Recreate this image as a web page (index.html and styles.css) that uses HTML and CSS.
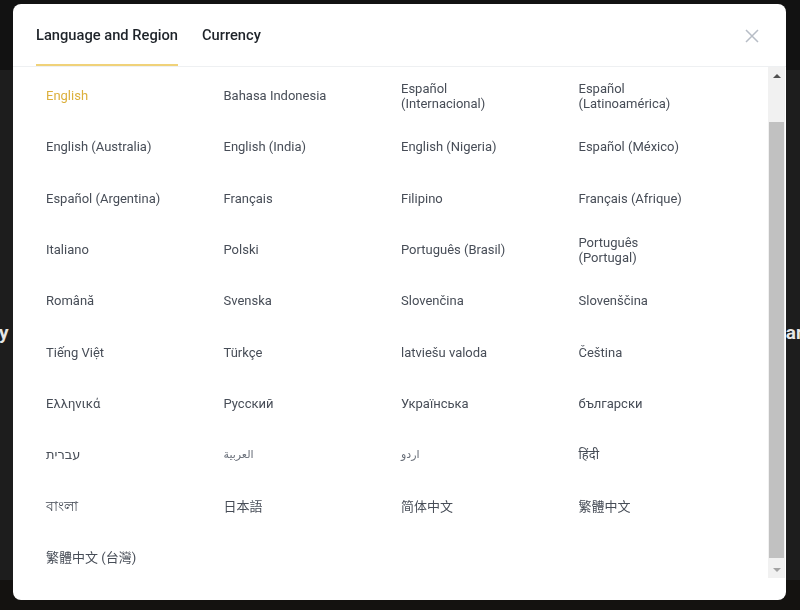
FILE: index.html
```html
<!DOCTYPE html>
<html lang="en">
<head>
<meta charset="utf-8">
<title>Language and Region</title>
<link rel="stylesheet" href="styles.css">
</head>
<body>
<div class="page">
  <div class="topbar"></div>
  <div class="hero">
    <div class="hero-line"><span class="hero-l">y</span><span class="hero-r">ar</span></div>
  </div>
  <div class="footer-strip"></div>
</div>

<div class="modal">
  <div class="modal-head">
    <div class="tabs">
      <div class="tab active">Language and Region</div>
      <div class="tab">Currency</div>
    </div>
    <button class="close" aria-label="Close">
      <svg width="14" height="14" viewBox="0 0 14 14"><path d="M1 1 L13 13 M13 1 L1 13" stroke="#b7bdc6" stroke-width="1.5" fill="none"/></svg>
    </button>
  </div>
  <div class="modal-body">
    <div class="list">
      <div class="item selected">English</div>
      <div class="item">Bahasa Indonesia</div>
      <div class="item">Español<br>(Internacional)</div>
      <div class="item">Español<br>(Latinoamérica)</div>

      <div class="item">English (Australia)</div>
      <div class="item">English (India)</div>
      <div class="item">English (Nigeria)</div>
      <div class="item">Español (México)</div>

      <div class="item">Español (Argentina)</div>
      <div class="item">Français</div>
      <div class="item">Filipino</div>
      <div class="item">Français (Afrique)</div>

      <div class="item">Italiano</div>
      <div class="item">Polski</div>
      <div class="item">Português (Brasil)</div>
      <div class="item">Português<br>(Portugal)</div>

      <div class="item">Română</div>
      <div class="item">Svenska</div>
      <div class="item">Slovenčina</div>
      <div class="item">Slovenščina</div>

      <div class="item">Tiếng Việt</div>
      <div class="item">Türkçe</div>
      <div class="item">latviešu valoda</div>
      <div class="item">Čeština</div>

      <div class="item">Ελληνικά</div>
      <div class="item">Русский</div>
      <div class="item">Українська</div>
      <div class="item">български</div>

      <div class="item">עברית</div>
      <div class="item arabic">العربية</div>
      <div class="item arabic">اردو</div>
      <div class="item">हिंदी</div>

      <div class="item bengali">বাংলা</div>
      <div class="item">日本語</div>
      <div class="item">简体中文</div>
      <div class="item">繁體中文</div>

      <div class="item">繁體中文 (台灣)</div>
    </div>
    <div class="scrollbar">
      <div class="sb-btn"><span class="arrow-up"></span></div>
      <div class="sb-track"><div class="sb-thumb"></div></div>
      <div class="sb-btn"><span class="arrow-down"></span></div>
    </div>
  </div>
</div>
</body>
</html>
```

FILE: styles.css
```css
* { box-sizing: border-box; }

html, body {
  margin: 0;
  padding: 0;
  width: 800px;
  height: 610px;
  overflow: hidden;
  background: #161616;
  font-family: Roboto, "Noto Sans", "DejaVu Sans", "Noto Sans CJK SC", sans-serif;
}

.page {
  height: 610px;
  display: flex;
  flex-direction: column;
}

.topbar {
  height: 70px;
  background: #121212;
}

.hero {
  flex: 1;
  background: #1d1d1d;
  display: flex;
  flex-direction: column;
  justify-content: center;
}

.hero-line {
  display: flex;
  justify-content: space-between;
  color: #e6e6e6;
  font-weight: 700;
  font-size: 19px;
  margin-top: 14px;
}

.hero-l { margin-left: -1px; }
.hero-r { margin-right: -3px; }

.footer-strip {
  height: 30px;
  background: #141210;
}

.modal {
  position: fixed;
  left: 13px;
  top: 4px;
  width: 773px;
  height: 596px;
  background: #ffffff;
  border-radius: 8px;
  display: flex;
  flex-direction: column;
  overflow: hidden;
}

.modal-head {
  height: 63px;
  flex: none;
  display: flex;
  align-items: stretch;
  padding: 0 27px 0 23px;
  border-bottom: 1px solid #eef0f2;
}

.tabs {
  display: flex;
  gap: 24px;
}

.tab {
  display: flex;
  align-items: center;
  padding-top: 2px;
  font-size: 14.7px;
  font-weight: 500;
  color: #1e2329;
  border-bottom: 2px solid transparent;
}

.tab.active {
  border-bottom-color: #f0d279;
}

.close {
  margin-left: auto;
  align-self: center;
  margin-top: 2px;
  background: none;
  border: 0;
  padding: 0;
  width: 14px;
  height: 14px;
  display: flex;
}

.modal-body {
  height: 511px;
  flex: none;
  display: flex;
  margin-right: 1px;
}

.list {
  flex: 1;
  overflow: hidden;
  display: grid;
  grid-template-columns: repeat(4, 1fr);
  grid-auto-rows: 51.33px;
  align-items: center;
  align-content: start;
  padding: 3px 12px 0 33px;
}

.item {
  font-size: 13px;
  line-height: 15px;
  color: #474d57;
}

.item.selected {
  color: #dcb03d;
}

.item.arabic {
  font-size: 11px;
  color: #6a707a;
}

.item.bengali {
  font-size: 14px;
}

.scrollbar {
  width: 17px;
  flex: none;
  background: #f1f1f1;
  display: flex;
  flex-direction: column;
}

.sb-btn {
  height: 17px;
  flex: none;
  display: flex;
  align-items: center;
  justify-content: center;
}

.arrow-up {
  width: 0;
  height: 0;
  border-left: 4px solid transparent;
  border-right: 4px solid transparent;
  border-bottom: 4px solid #505050;
}

.arrow-down {
  width: 0;
  height: 0;
  border-left: 4px solid transparent;
  border-right: 4px solid transparent;
  border-top: 4px solid #a3a3a3;
}

.sb-track {
  flex: 1;
  display: flex;
  flex-direction: column;
  padding: 38px 1px 3px 1px;
}

.sb-thumb {
  flex: 1;
  background: #c1c1c1;
}
```
